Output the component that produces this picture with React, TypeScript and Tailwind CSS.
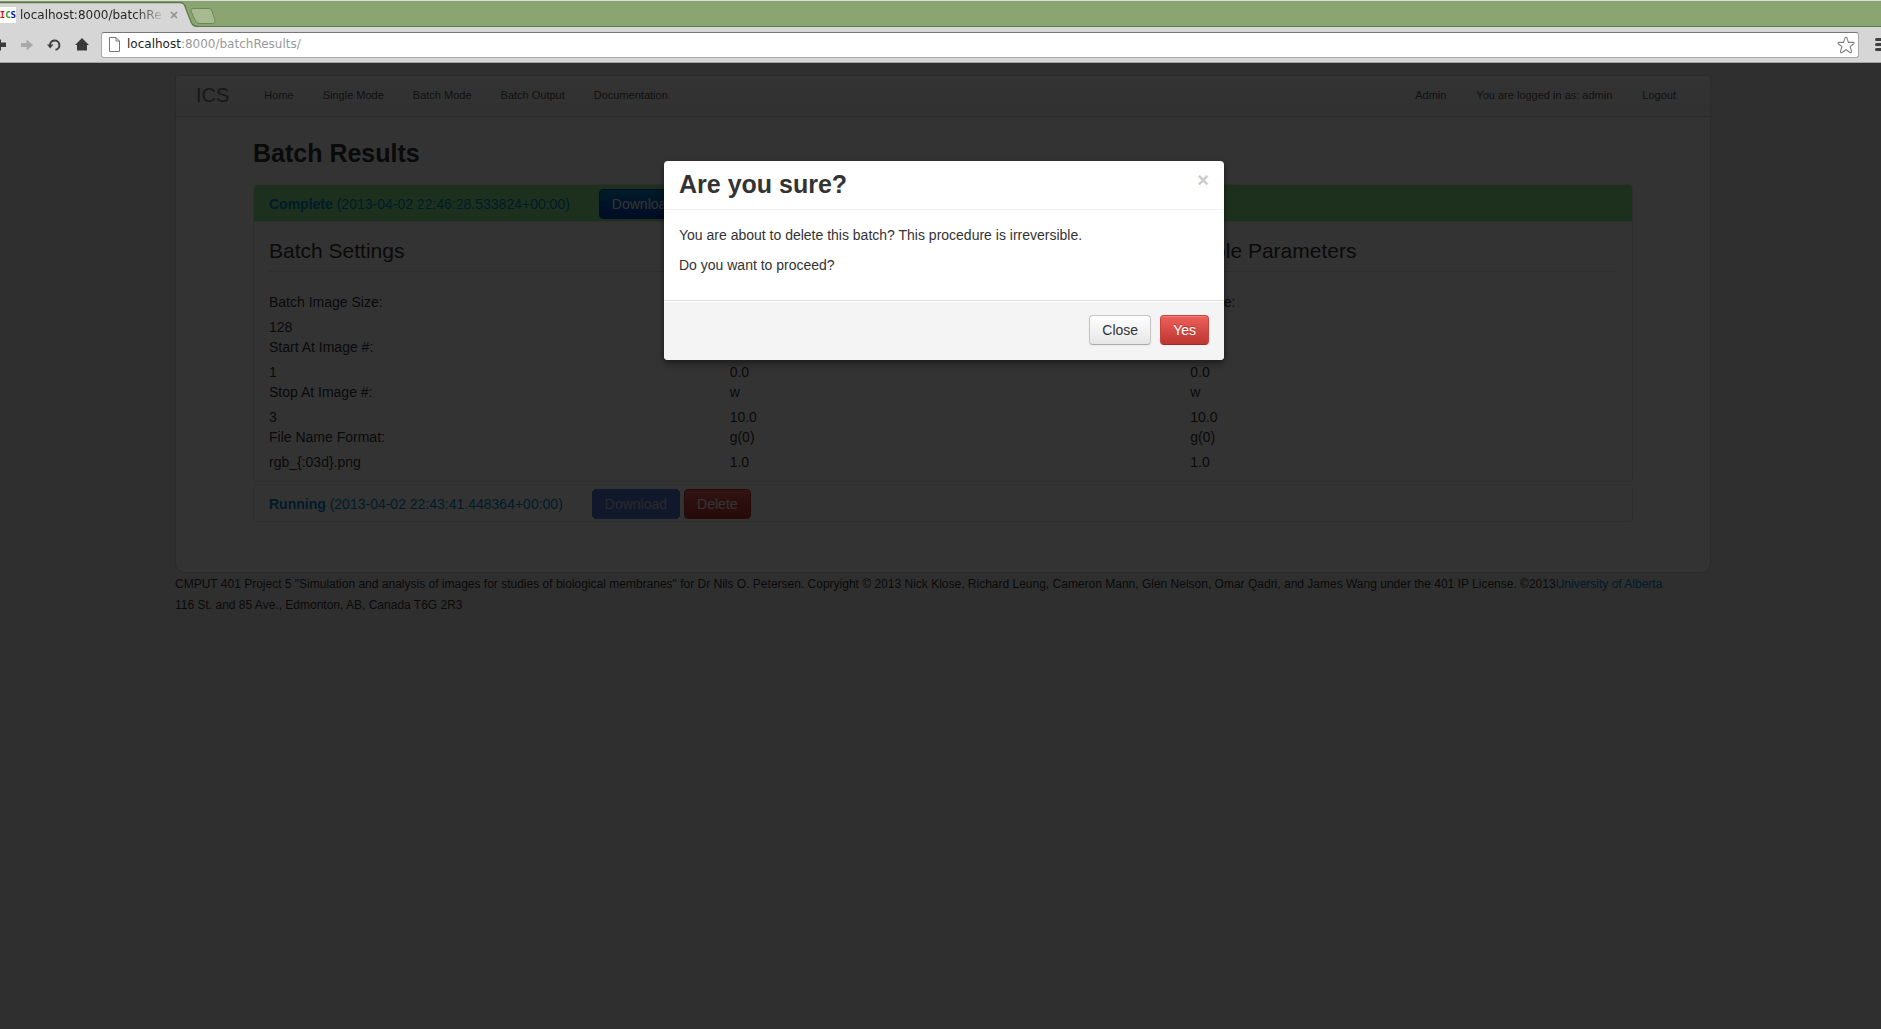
import React from "react";

type Row = { label: string; value: string };

const settings: Row[] = [
  { label: "Batch Image Size:", value: "128" },
  { label: "Start At Image #:", value: "1" },
  { label: "Stop At Image #:", value: "3" },
  { label: "File Name Format:", value: "rgb_{:03d}.png" },
];

const parameters: Row[] = [
  { label: "Range:", value: "\u00a0" },
  { label: "\u00a0", value: "0.0" },
  { label: "w", value: "10.0" },
  { label: "g(0)", value: "1.0" },
];

function BrowserChrome() {
  return (
    <header className="relative z-30 font-['DejaVu_Sans',sans-serif] text-[12px] leading-4 text-[#222]">
      <div className="flex h-[27px] items-end border-t border-[#dcdcdc] bg-[#8aa572] shadow-[inset_0_-1px_0_#5f7a4a]">
        <div className="relative flex h-[26px] w-[195px] items-center">
          <svg className="absolute inset-0 h-[26px] w-[200px]" viewBox="0 0 200 26" aria-hidden="true">
            <path d="M0 1.500H180Q183 1.500 184.500 4L191 21Q193 25.500 197 25.500V26H0Z" fill="#d6d6d6" />
            <path d="M0 1.500H180Q183 1.500 184.500 4L191 21Q193 25.500 197 25.500" fill="none" stroke="#5f7a4a" strokeWidth="1.300" />
          </svg>
          <div className="relative flex w-full items-center pt-[2px]">
            <span className="flex h-4 w-4 items-center justify-end bg-white font-['DejaVu_Sans_Mono',monospace] text-[9px] font-bold">
              <span className="text-[#e01020]">I</span>
              <span className="text-[#10a030]">C</span>
              <span className="text-[#1010b0]">S</span>
            </span>
            <span className="ml-1 w-[143px] bg-linear-to-r from-[#222] from-80% to-[#c4c4c4] bg-clip-text whitespace-nowrap text-transparent">
              localhost:8000/batchRe
            </span>
            <button type="button" aria-label="Close tab" className="ml-[7px]">
              <svg className="h-[8px] w-[8px]" viewBox="0 0 8 8">
                <path d="M1 1L7 7M7 1L1 7" stroke="#929292" strokeWidth="1.700" />
              </svg>
            </button>
          </div>
        </div>
        <button type="button" aria-label="New tab" className="mb-[3px] -ml-[5px]">
          <svg className="h-[16px] w-[26px]" viewBox="0 0 26 16">
            <path d="M3 .5H19Q21 .5 22 3L25 12.500Q25.500 15.500 23 15.500H9Q6.500 15.500 5 12L1 3Q.5 .5 3 .5Z" fill="#a6ba92" stroke="#6d8858" />
          </svg>
        </button>
      </div>
      <div className="flex h-9 items-center border-b border-[#a5a5a5] bg-[#d6d6d6]">
        <button type="button" aria-label="Back" className="w-[7px]">
          <svg className="h-[12px] w-[7px]" viewBox="0 0 7 12">
            <path d="M-5 6L1 0V3.500H6V8H1V12Z" fill="#3a3a3a" />
          </svg>
        </button>
        <button type="button" aria-label="Forward" className="ml-[14px]">
          <svg className="h-[12px] w-[12px]" viewBox="0 0 12 12">
            <path d="M0 4H5.500V.5L12 6L5.500 11.500V8H0Z" fill="#a9a9a9" />
          </svg>
        </button>
        <button type="button" aria-label="Reload" className="ml-[14px]">
          <svg className="h-[14px] w-[14px]" viewBox="0 0 14 14">
            <path d="M3 7.500A4.700 4.700 0 1 1 8.500 11.800" fill="none" stroke="#3f3f3f" strokeWidth="2" />
            <path d="M0 6.500H6.500L3.200 10.500Z" fill="#3f3f3f" />
          </svg>
        </button>
        <button type="button" aria-label="Home page" className="ml-[14px]">
          <svg className="h-[13px] w-[14px]" viewBox="0 0 14 13">
            <path d="M7 0L14 7H12V12.500H2V7H0Z" fill="#3a3a3a" />
          </svg>
        </button>
        <div className="ml-3 flex h-[26px] flex-1 items-center rounded-[3px] border border-[#aaa] border-t-[#777] bg-white pr-[3px] pl-[7px]">
          <svg className="h-[15px] w-[11px] shrink-0" viewBox="0 0 11 15" aria-hidden="true">
            <path d="M.5 .5H7L10.500 4V14.500H.5ZM7 .5V4H10.500" fill="none" stroke="#777" />
          </svg>
          <div className="ml-[7px] flex-1 pb-[2px] text-[#999]">
            <span className="text-[#222]">localhost</span>:8000/batchResults/
          </div>
          <button type="button" aria-label="Bookmark this page">
            <svg className="h-[18px] w-[18px]" viewBox="0 0 18 18">
              <path d="M9 1.200Q9.800 1.200 10.100 2.200L11.400 6.400H16Q17.800 6.700 16.500 8L13.100 10.600L14.500 15.200Q14.700 17.200 13 16.400L9 13.700L5 16.400Q3.300 17.200 3.500 15.200L4.900 10.600L1.500 8Q.2 6.700 2 6.400H6.600L7.900 2.200Q8.200 1.200 9 1.200Z" fill="#fff" stroke="#808080" strokeWidth="1.100" />
            </svg>
          </button>
        </div>
        <button type="button" aria-label="Menu" className="ml-4">
          <svg className="h-[13px] w-[6px]" viewBox="0 0 6 13">
            <path d="M1.500 1.500H7M1.500 6.500H7M1.500 11.500H7" stroke="#3f3f3f" strokeWidth="3" strokeLinecap="round" />
          </svg>
        </button>
      </div>
    </header>
  );
}

function NavBar() {
  return (
    <nav className="flex h-[42px] items-center rounded-t border border-[#d4d4d4] bg-linear-to-b from-white to-[#f2f2f2] pr-[34px] pb-[2px] pl-5 text-[11px] text-[#777] shadow-[0_1px_4px_rgba(0,0,0,0.065)]">
      <a href="#home" className="mr-[35px] text-[20px] leading-5">ICS</a>
      <div className="flex gap-[29px] text-[#555]">
        <a href="#home">Home</a>
        <a href="#single">Single Mode</a>
        <a href="#batch">Batch Mode</a>
        <a href="#output">Batch Output</a>
        <a href="#docs">Documentation</a>
      </div>
      <div className="ml-auto flex gap-[30px] text-[#555]">
        <a href="#admin">Admin</a>
        <a href="#user">You are logged in as: admin</a>
        <a href="#logout">Logout</a>
      </div>
    </nav>
  );
}

function Column({ title, rows }: { title: string; rows: Row[] }) {
  return (
    <section>
      <h4 className="mb-5 border-b border-[#e5e5e5] text-[21px] leading-10">{title}</h4>
      <dl>
        {rows.map((row, i) => (
          <div key={i}>
            <dt className="mb-[5px]">{row.label}</dt>
            <dd>{row.value}</dd>
          </div>
        ))}
      </dl>
    </section>
  );
}

function BatchHeading({ status, date, done }: { status: string; date: string; done: boolean }) {
  return (
    <div className={done ? "flex items-center rounded-t-[3px] bg-[#93ee93] px-[15px] pt-1 pb-[2px]" : "flex items-center px-[15px] pt-1 pb-[2px]"}>
      <a href="#batch" className="mr-[29px] text-[#0088cc]">
        <strong>{status}</strong> ({date})
      </a>
      <button
        type="button"
        disabled={!done}
        className={
          done
            ? "mr-1 h-[30px] rounded border border-[#003d99] bg-linear-to-b from-[#0088cc] to-[#0037b8] px-3 text-white"
            : "mr-1 h-[30px] rounded border border-[#5577d8] bg-[#5577dd] px-3 text-[#ccc]"
        }
      >
        Download
      </button>
      <button type="button" className="h-[30px] rounded border border-[#bd362f] bg-linear-to-b from-[#ee5f5b] to-[#bd362f] px-3 text-white">
        Delete
      </button>
    </div>
  );
}

function Page() {
  return (
    <div className="px-4 pt-3 pl-[21px]">
      <div className="mx-auto max-w-[1536px]">
        <main className="rounded-b-[10px] border border-t-0 border-[#d4d4d4] bg-white pb-[50px]">
          <div className="-mx-px">
            <NavBar />
          </div>
          <div className="mx-[77px] pt-4">
            <h3 className="mb-[11px] text-[25px] leading-10 font-bold">Batch Results</h3>
            <div className="mb-[2px] rounded border border-[#e5e5e5]">
              <BatchHeading done status="Complete" date="2013-04-02 22:46:28.533824+00:00" />
              <div className="grid grid-cols-3 gap-[34px] border-t border-[#e5e5e5] px-[15px] py-[9px]">
                <Column title="Batch Settings" rows={settings} />
                <Column title="Dual Parameters" rows={parameters} />
                <Column title="Triple Parameters" rows={parameters} />
              </div>
            </div>
            <div className="rounded border border-[#e5e5e5]">
              <BatchHeading done={false} status="Running" date="2013-04-02 22:43:41.448364+00:00" />
            </div>
          </div>
        </main>
        <footer className="pt-px text-[12px] leading-[21px]">
          <p>
            CMPUT 401 Project 5 "Simulation and analysis of images for studies of biological membranes" for Dr Nils O. Petersen. Copryight © 2013 Nick Klose, Richard Leung, Cameron Mann, Glen Nelson, Omar Qadri, and James Wang under the 401 IP License. ©2013
            <a href="#ualberta" className="text-[#0088cc]">University of Alberta</a>
          </p>
          <p>116 St. and 85 Ave., Edmonton, AB, Canada T6G 2R3</p>
        </footer>
      </div>
    </div>
  );
}

function ConfirmDialog() {
  return (
    <div className="absolute inset-0 bg-black/80 pt-[98px] pl-[7px]">
      <div
        role="dialog"
        aria-labelledby="confirm-title"
        className="mx-auto w-[560px] rounded bg-white shadow-[0_3px_7px_rgba(0,0,0,0.5)]"
      >
        <div className="flex items-start justify-between border-b border-[#eee] px-[15px] pt-2 pb-[10px]">
          <h3 id="confirm-title" className="text-[25px] leading-[30px] font-bold">Are you sure?</h3>
          <button type="button" aria-label="Close dialog" className="pt-px text-[20px] leading-5 font-bold text-[#ccc]">×</button>
        </div>
        <div className="p-[15px] pb-[25px]">
          <p className="mb-[10px]">You are about to delete this batch? This procedure is irreversible.</p>
          <p>Do you want to proceed?</p>
        </div>
        <div className="flex justify-end gap-[9px] rounded-b border-t border-[#ddd] bg-[#f4f4f4] px-[15px] pt-[14px] pb-[15px] shadow-[inset_0_1px_0_#fff]">
          <button type="button" className="h-[30px] rounded border border-[#c5c5c5] border-b-[#aaa] bg-linear-to-b from-white to-[#e6e6e6] px-3 shadow-[0_1px_2px_rgba(0,0,0,0.05)]">
            Close
          </button>
          <button type="button" className="h-[30px] rounded border border-[#c9433e] border-b-[#a52a25] bg-linear-to-b from-[#ee5f5b] to-[#bd362f] px-3 text-white shadow-[inset_0_1px_0_rgba(255,255,255,0.2)] text-shadow-[0_-1px_0_rgba(0,0,0,0.25)]">
            Yes
          </button>
        </div>
      </div>
    </div>
  );
}

export default function App() {
  return (
    <div className="flex min-h-screen flex-col">
      <BrowserChrome />
      <div className="relative flex-1 bg-[#ececec] font-['Liberation_Sans',Arial,sans-serif] text-[14px] leading-5 text-[#333]">
        <Page />
        <ConfirmDialog />
      </div>
    </div>
  );
}
